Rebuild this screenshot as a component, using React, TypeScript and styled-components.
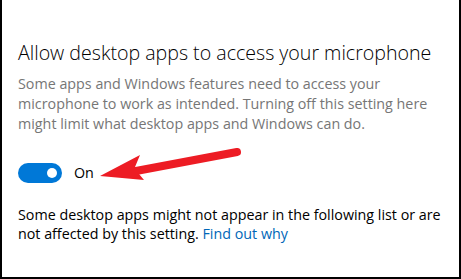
import React from 'react';
import styled, { createGlobalStyle } from 'styled-components';

const GlobalStyle = createGlobalStyle`
  html, body {
    margin: 0;
    padding: 0;
    background: #ffffff;
  }
  body {
    font-family: "Open Sans", "Noto Sans", "Liberation Sans", sans-serif;
  }
`;

const Frame = styled.div`
  box-sizing: border-box;
  width: 461px;
  height: 279px;
  border-left: 2px solid #000000;
  border-right: 2px solid #000000;
  border-bottom: 2px solid #000000;
  padding: 39px 0 0 16px;
  background: #ffffff;
  overflow: hidden;
  white-space: nowrap;
`;

const Title = styled.h1`
  margin: 0;
  font-size: 19.6px;
  font-weight: 300;
  line-height: 28px;
  color: #000000;
`;

const Description = styled.p`
  margin: 7px 0 0;
  font-size: 14.3px;
  line-height: 20px;
  color: #767676;
`;

const ToggleRow = styled.div`
  position: relative;
  display: flex;
  align-items: center;
  gap: 12px;
  margin-top: 29px;
`;

const Switch = styled.div<{ on: boolean }>`
  position: relative;
  width: 44px;
  height: 20px;
  border-radius: 10px;
  background: ${({ on }) => (on ? '#0078d7' : '#ffffff')};

  &::after {
    content: '';
    position: absolute;
    top: 5px;
    left: ${({ on }) => (on ? '29px' : '5px')};
    width: 10px;
    height: 10px;
    border-radius: 50%;
    background: #ffffff;
  }
`;

const SwitchLabel = styled.span`
  font-size: 14.3px;
  line-height: 20px;
  color: #000000;
`;

const Arrow = styled.svg`
  position: absolute;
  left: 72px;
  top: -19px;
`;

const Note = styled.p`
  margin: 22px 0 0;
  font-size: 14.3px;
  line-height: 19px;
  color: #000000;
`;

const Link = styled.a`
  color: #0067b8;
  text-decoration: none;
`;

export default function App() {
  return (
    <>
      <GlobalStyle />
      <Frame>
        <Title>Allow desktop apps to access your microphone</Title>
        <Description>
          Some apps and Windows features need to access your
          <br />
          microphone to work as intended. Turning off this setting here
          <br />
          might limit what desktop apps and Windows can do.
        </Description>
        <ToggleRow>
          <Switch on />
          <SwitchLabel>On</SwitchLabel>
          <Arrow width="160" height="45" viewBox="0 0 160 45">
            <line x1="46" y1="27" x2="147" y2="8" stroke="#ed1c24" strokeWidth="8" strokeLinecap="round" />
            <polygon points="10,32 50,11 45,23 49,30 54,36" fill="#ed1c24" />
          </Arrow>
        </ToggleRow>
        <Note>
          Some desktop apps might not appear in the following list or are
          <br />
          not affected by this setting. <Link href="#">Find out why</Link>
        </Note>
      </Frame>
    </>
  );
}
